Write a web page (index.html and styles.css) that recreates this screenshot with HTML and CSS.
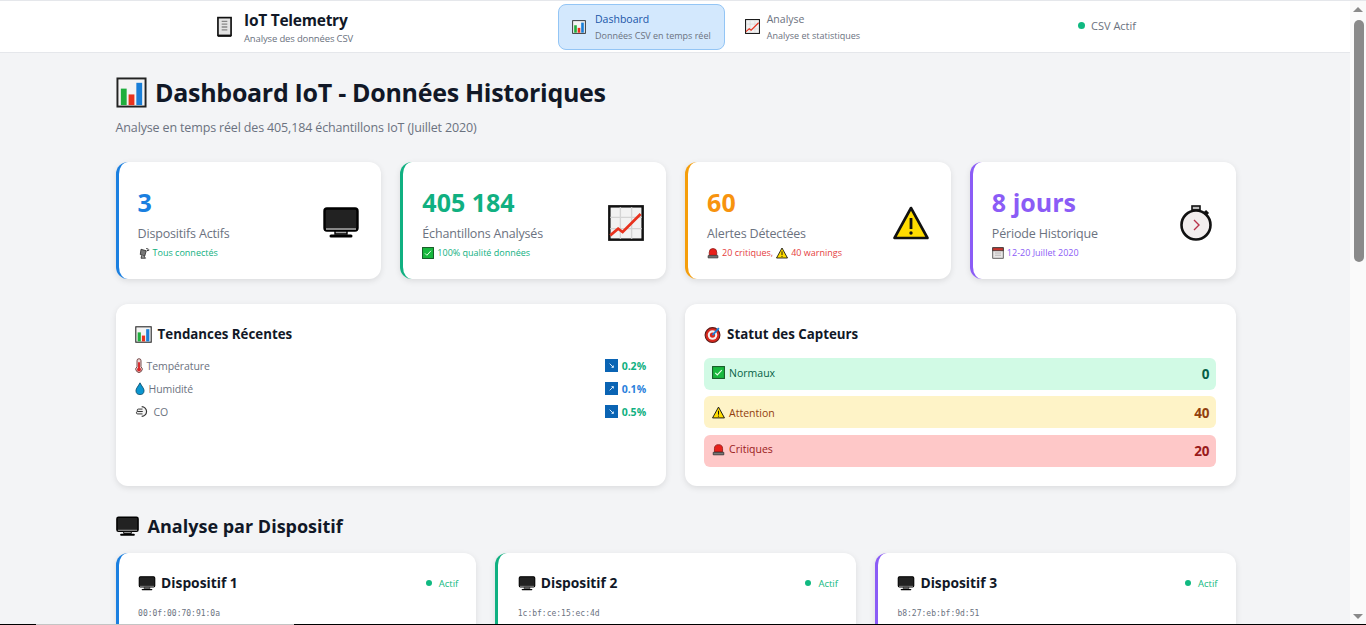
FILE: index.html
```html
<!DOCTYPE html>
<html lang="fr">
<head>
<meta charset="utf-8">
<title>IoT Telemetry</title>
<link rel="stylesheet" href="styles.css">
</head>
<body>
<svg class="sprite" aria-hidden="true">
  <symbol id="i-chart" viewBox="0 0 32 32"><rect x="1.5" y="1.5" width="29" height="29" fill="#f4f4f4" stroke="#222" stroke-width="2"/><rect x="5" y="12" width="6" height="17" fill="#1fae3c"/><rect x="13" y="18" width="6" height="11" fill="#e8321e"/><rect x="21" y="6" width="6" height="23" fill="#1a7fd8"/></symbol>
  <symbol id="i-monitor" viewBox="0 0 36 32"><rect x="1.5" y="1.5" width="33" height="22" rx="2.5" fill="#222" stroke="#000" stroke-width="2.4"/><path d="M3 21h30v2H3z" fill="#888"/><path d="M12 24h12v3H12z" fill="#aaa" stroke="#000" stroke-width="1.4"/><path d="M8 29h20" stroke="#000" stroke-width="3" stroke-linecap="round"/></symbol>
  <symbol id="i-trend" viewBox="0 0 32 32"><rect x="1.2" y="1.2" width="29.6" height="29.6" fill="#f2f2f2" stroke="#111" stroke-width="2.2"/><path d="M11 2v28M21 2v28M2 11h28M2 21h28" stroke="#d4d4d4" stroke-width="1.2"/><path d="M2 27l7-6 4 3L29 8" fill="none" stroke="#e8321e" stroke-width="2.4"/></symbol>
  <symbol id="i-warn" viewBox="0 0 36 36"><path d="M18 3L34.500 33H1.500z" fill="#ffdc00" stroke="#111" stroke-width="2.600" stroke-linejoin="round"/><path d="M18 13v11" stroke="#111" stroke-width="2.800"/><circle cx="18" cy="28" r="1.700" fill="#111"/></symbol>
  <symbol id="i-watch" viewBox="0 0 32 36"><rect x="12" y="1" width="8" height="4" fill="#bbb" stroke="#111" stroke-width="1.600"/><path d="M25 6l3 3" stroke="#111" stroke-width="3"/><circle cx="16" cy="20" r="14.500" fill="#f2eeee" stroke="#111" stroke-width="2.600"/><path d="M14 15l5 5-5 5" fill="none" stroke="#b8324a" stroke-width="1.400"/></symbol>
  <symbol id="i-sat" viewBox="0 0 16 16"><path d="M4 3l7 2-2 7-6-2z" fill="#777" stroke="#222"/><path d="M5 11l-1 4h6l-2-3" fill="#999" stroke="#222"/><path d="M11 2l3 1M12 5l3-1" stroke="#222" stroke-width="1.300"/></symbol>
  <symbol id="i-check" viewBox="0 0 16 16"><rect x=".7" y=".7" width="14.600" height="14.600" fill="#18b83e" stroke="#155a26" stroke-width="1.300"/><path d="M4 8.500l2.500 2.500L12 5" fill="none" stroke="#eaffea" stroke-width="1.300"/></symbol>
  <symbol id="i-siren" viewBox="0 0 16 16"><path d="M3 11V7a5 5 0 0 1 10 0v4z" fill="#e8201a" stroke="#8a1a18"/><path d="M1.500 11.500h13v3h-13z" fill="#777" stroke="#333"/></symbol>
  <symbol id="i-cal" viewBox="0 0 16 16"><rect x="1" y="1" width="14" height="14" fill="#e8e6e6" stroke="#333"/><rect x="1" y="1" width="14" height="4" fill="#c8352e" stroke="#333"/><path d="M4 8h8M4 11h8" stroke="#aaa"/></symbol>
  <symbol id="i-therm" viewBox="0 0 10 18"><path d="M2.500 3a2.500 2.500 0 0 1 5 0v7.500a4 4 0 1 1-5 0z" fill="#f0d8d8" stroke="#522"/><path d="M5 5v9" stroke="#d8282a" stroke-width="2.400"/><circle cx="5" cy="14" r="2.500" fill="#d8282a"/></symbol>
  <symbol id="i-drop" viewBox="0 0 12 16"><path d="M6 1C4 5 1 8 1 10.500a5 5 0 0 0 10 0C11 8 8 5 6 1z" fill="#0b95cf" stroke="#0a4a68"/></symbol>
  <symbol id="i-wind" viewBox="0 0 18 16"><path d="M8 2a6 6 0 1 1 0 12" fill="#f4f4f4" stroke="#333" stroke-width="1.400"/><path d="M9 5H4a1.500 1.500 0 0 0 0 3h5M9 8H3a1.500 1.500 0 0 0 0 3h6" fill="#eee" stroke="#333" stroke-width="1.200"/></symbol>
  <symbol id="i-down" viewBox="0 0 14 14"><rect width="14" height="14" fill="#0a64b4"/><path d="M5 5l4 4M9 7v2H7" fill="none" stroke="#e8f4ff" stroke-width="1"/></symbol>
  <symbol id="i-up" viewBox="0 0 14 14"><rect width="14" height="14" fill="#0a64b4"/><path d="M5 9l4-4M7 5h2v2" fill="none" stroke="#e8f4ff" stroke-width="1"/></symbol>
  <symbol id="i-target" viewBox="0 0 16 16"><circle cx="8" cy="8.500" r="7" fill="#d8281e" stroke="#5a1a18"/><circle cx="8" cy="8.500" r="4.500" fill="#f6f0f0"/><circle cx="8" cy="8.500" r="2.500" fill="#d8281e"/><path d="M8 8.500L14 2" stroke="#1a7fd8" stroke-width="1.800"/></symbol>
  <symbol id="i-pager" viewBox="0 0 16 22"><rect x="1" y="1" width="14" height="19" fill="#e4e4e4" stroke="#111" stroke-width="1.800"/><path d="M5 5h6M5 8h6M5 11h6M5 14h6" stroke="#888" stroke-width="1.400"/><path d="M1 20h14v1.500H1z" fill="#111"/></symbol>
</svg>

<div class="app">
  <div class="main">
    <header class="topbar">
      <div class="brand">
        <svg class="brand-icon"><use href="#i-pager"/></svg>
        <div>
          <div class="brand-name">IoT Telemetry</div>
          <div class="brand-sub">Analyse des données CSV</div>
        </div>
      </div>
      <nav class="nav">
        <a class="nav-item nav-active">
          <svg class="nav-icon"><use href="#i-chart"/></svg>
          <span class="nav-text"><span class="nav-title">Dashboard</span><span class="nav-sub">Données CSV en temps réel</span></span>
        </a>
        <a class="nav-item">
          <svg class="nav-icon"><use href="#i-trend"/></svg>
          <span class="nav-text"><span class="nav-title">Analyse</span><span class="nav-sub">Analyse et statistiques</span></span>
        </a>
      </nav>
      <div class="csv-status"><span class="dot"></span>CSV Actif</div>
    </header>

    <main class="content">
      <h1 class="page-title"><svg class="page-icon"><use href="#i-chart"/></svg>Dashboard IoT - Données Historiques</h1>
      <p class="page-sub">Analyse en temps réel des 405,184 échantillons IoT (Juillet 2020)</p>

      <section class="kpis">
        <article class="kpi kpi-blue">
          <div class="kpi-body">
            <div class="kpi-value">3</div>
            <div class="kpi-label">Dispositifs Actifs</div>
            <div class="kpi-note"><svg class="mini"><use href="#i-sat"/></svg>Tous connectés</div>
          </div>
          <svg class="kpi-icon"><use href="#i-monitor"/></svg>
        </article>
        <article class="kpi kpi-green">
          <div class="kpi-body">
            <div class="kpi-value">405 184</div>
            <div class="kpi-label">Échantillons Analysés</div>
            <div class="kpi-note"><svg class="mini"><use href="#i-check"/></svg>100% qualité données</div>
          </div>
          <svg class="kpi-icon"><use href="#i-trend"/></svg>
        </article>
        <article class="kpi kpi-orange">
          <div class="kpi-body">
            <div class="kpi-value">60</div>
            <div class="kpi-label">Alertes Détectées</div>
            <div class="kpi-note"><svg class="mini"><use href="#i-siren"/></svg>20 critiques,<svg class="mini mini-after"><use href="#i-warn"/></svg>40 warnings</div>
          </div>
          <svg class="kpi-icon"><use href="#i-warn"/></svg>
        </article>
        <article class="kpi kpi-purple">
          <div class="kpi-body">
            <div class="kpi-value">8 jours</div>
            <div class="kpi-label">Période Historique</div>
            <div class="kpi-note"><svg class="mini"><use href="#i-cal"/></svg>12-20 Juillet 2020</div>
          </div>
          <svg class="kpi-icon"><use href="#i-watch"/></svg>
        </article>
      </section>

      <section class="panels">
        <article class="panel">
          <h2 class="panel-title"><svg class="panel-icon"><use href="#i-chart"/></svg>Tendances Récentes</h2>
          <ul class="trends">
            <li class="trend"><span class="trend-name"><svg class="mini mini-therm"><use href="#i-therm"/></svg>Température</span><span class="trend-val val-green"><svg class="mini"><use href="#i-down"/></svg>0.2%</span></li>
            <li class="trend"><span class="trend-name"><svg class="mini mini-drop"><use href="#i-drop"/></svg>Humidité</span><span class="trend-val val-blue"><svg class="mini"><use href="#i-up"/></svg>0.1%</span></li>
            <li class="trend"><span class="trend-name"><svg class="mini mini-wind"><use href="#i-wind"/></svg>CO</span><span class="trend-val val-green"><svg class="mini"><use href="#i-down"/></svg>0.5%</span></li>
          </ul>
        </article>
        <article class="panel">
          <h2 class="panel-title"><svg class="panel-icon"><use href="#i-target"/></svg>Statut des Capteurs</h2>
          <div class="statuses">
            <div class="status st-ok"><span class="status-name"><svg class="st-icon"><use href="#i-check"/></svg>Normaux</span><b class="status-num">0</b></div>
            <div class="status st-warn"><span class="status-name"><svg class="st-icon"><use href="#i-warn"/></svg>Attention</span><b class="status-num">40</b></div>
            <div class="status st-crit"><span class="status-name"><svg class="st-icon"><use href="#i-siren"/></svg>Critiques</span><b class="status-num">20</b></div>
          </div>
        </article>
      </section>

      <h2 class="section-title"><svg class="section-icon"><use href="#i-monitor"/></svg>Analyse par Dispositif</h2>
      <section class="devices">
        <article class="device kpi-blue">
          <div class="device-head"><h3 class="device-name"><svg class="device-icon"><use href="#i-monitor"/></svg>Dispositif 1</h3><span class="device-state"><span class="dot"></span>Actif</span></div>
          <div class="device-mac">00:0f:00:70:91:0a</div>
        </article>
        <article class="device kpi-green">
          <div class="device-head"><h3 class="device-name"><svg class="device-icon"><use href="#i-monitor"/></svg>Dispositif 2</h3><span class="device-state"><span class="dot"></span>Actif</span></div>
          <div class="device-mac">1c:bf:ce:15:ec:4d</div>
        </article>
        <article class="device kpi-purple">
          <div class="device-head"><h3 class="device-name"><svg class="device-icon"><use href="#i-monitor"/></svg>Dispositif 3</h3><span class="device-state"><span class="dot"></span>Actif</span></div>
          <div class="device-mac">b8:27:eb:bf:9d:51</div>
        </article>
      </section>
    </main>
  </div>
  <div class="scrollbar" aria-hidden="true">
    <span class="arrow arrow-up"></span>
    <span class="thumb"></span>
    <span class="arrow arrow-down"></span>
  </div>
</div>
<div class="edge-line" aria-hidden="true"></div>
</body>
</html>
```
FILE: styles.css
```css
* { box-sizing: border-box; }
html, body { margin: 0; height: 625px; overflow: hidden; }
body { position: relative; font-family: "Open Sans", "Noto Sans", sans-serif; color: #111827; background: #f3f4f6; }
.sprite { display: none; }
.app { display: flex; height: 625px; border-top: 1px solid #e5e7eb; border-bottom: 1px solid #000; }
.main { flex: 1; min-width: 0; overflow: hidden; }
.edge-line { position: absolute; left: 36px; bottom: 0; width: 258px; height: 1px; background: #c4c4c4; }

.topbar { display: grid; grid-template-columns: 341px 520px auto; align-items: center; height: 52px; padding-left: 217px; background: #fff; border-bottom: 1px solid #e5e7eb; }
.brand { display: flex; align-items: center; gap: 12px; }
.brand-icon { width: 15px; height: 22px; }
.brand-name { margin-top: 1px; font-size: 15.500px; font-weight: 700; line-height: 20px; letter-spacing: -.25px; }
.brand-sub { margin-top: 2px; font-size: 9.500px; line-height: 13px; letter-spacing: -.15px; color: #6b7280; }
.nav { display: flex; gap: 19px; }
.nav-item { display: flex; align-items: center; gap: 9px; height: 46px; padding: 0 13px; border: 1px solid transparent; border-radius: 8px; }
.nav-item + .nav-item { gap: 7px; padding-left: 0; }
.nav-active { background: #d3e8fd; border-color: #93c5f5; }
.nav-icon { width: 14px; height: 14px; }
.nav-item + .nav-item .nav-icon { width: 15px; height: 15px; }
.nav-text { display: flex; flex-direction: column; gap: 3px; padding-top: 1px; }
.nav-title { font-size: 10.500px; line-height: 14px; color: #6b7280; }
.nav-sub { font-size: 9px; line-height: 13px; color: #6b7280; }
.nav-active .nav-title { color: #1a56a8; }
.csv-status { display: flex; align-items: center; gap: 6px; margin-top: -2px; font-size: 11px; color: #6b7280; }
.dot { width: 7px; height: 7px; border-radius: 50%; background: #10b981; flex: none; }

.content { width: 1120px; margin: 0 0 0 115.600px; padding-top: 21px; }
.page-title { display: flex; align-items: center; gap: 8.500px; margin: 0; font-size: 25px; line-height: 36px; font-weight: 700; letter-spacing: -.3px; }
.page-icon { width: 31px; height: 31px; }
.page-sub { margin: 9px 0 0; font-size: 12.500px; line-height: 18px; letter-spacing: -.15px; color: #6b7280; }

.kpis { display: grid; grid-template-columns: repeat(4, 1fr); gap: 19px; margin-top: 25px; }
.kpi { display: flex; justify-content: space-between; align-items: center; height: 117px; padding: 0 22px 0 19px; background: #fff; border-left: 3px solid; border-radius: 12px; box-shadow: 0 2px 6px rgba(0,0,0,.1); }
.kpi-body { padding-top: 4px; }
.kpi-value { font-size: 25px; line-height: 34px; font-weight: 700; }
.kpi-label { margin-top: 6px; font-size: 12.500px; line-height: 18px; letter-spacing: -.18px; color: #6b7280; }
.kpi-note { display: flex; align-items: center; margin-top: 3px; font-size: 9px; line-height: 14px; color: #10b081; }
.kpi-orange .kpi-note { color: #e53e3e; }
.kpi-purple .kpi-note { color: #8b5cf6; }
.mini { width: 12px; height: 12px; margin-right: 3px; flex: none; }
.mini-after { margin-left: 3px; }
.kpi-icon { width: 36px; height: 36px; margin-top: 4px; }

.panels { display: grid; grid-template-columns: 1fr 1fr; gap: 19px; margin-top: 25px; }
.panel { height: 182px; padding: 20px 20px 0 19px; background: #fff; border-radius: 12px; box-shadow: 0 2px 6px rgba(0,0,0,.1); }
.panel-title { display: flex; align-items: center; gap: 6px; margin: 0; font-size: 13.300px; line-height: 20px; font-weight: 700; }
.panel-icon { width: 17px; height: 17px; }
.trends { margin: 10px 0 0; padding: 0; list-style: none; }
.trend { display: flex; justify-content: space-between; align-items: center; height: 23px; font-size: 10.500px; }
.trend-name { display: flex; align-items: center; letter-spacing: -.1px; color: #6b7280; }
.mini-therm { width: 8px; height: 15px; margin-right: 4px; }
.mini-drop { width: 10px; height: 13px; margin-right: 4px; }
.mini-wind { width: 15px; height: 13px; margin-right: 4px; }
.trend-val { display: flex; align-items: center; font-weight: 700; font-size: 10.500px; }
.trend-val .mini { width: 13px; height: 13px; margin-right: 4px; }
.val-green { color: #10b081; }
.val-blue { color: #2a7fdc; }
.statuses { display: flex; flex-direction: column; gap: 6.400px; margin-top: 14px; }
.status { display: flex; justify-content: space-between; align-items: center; height: 32px; padding: 0 6px 0 8px; border-radius: 6px; }
.status-name { display: flex; align-items: center; gap: 4px; font-size: 10.500px; margin-top: -3px; }
.st-icon { width: 13px; height: 13px; }
.status-num { font-size: 13.500px; }
.st-ok { background: #d1fae5; color: #065f46; }
.st-warn { padding-top: 2px; background: #fef3c7; color: #92400e; }
.st-warn .status-name { margin-top: -1px; }
.st-crit { background: #fec8c8; color: #991b1b; }

.section-title { display: flex; align-items: center; gap: 9px; margin: 27px 0 0; font-size: 18px; line-height: 26px; font-weight: 700; }
.section-icon { width: 23px; height: 21px; }
.devices { display: grid; grid-template-columns: repeat(3, 1fr); gap: 19px; margin-top: 14px; }
.device { height: 120px; padding: 20px 18px 0 19.500px; background: #fff; border-left: 3px solid; border-radius: 12px; box-shadow: 0 2px 6px rgba(0,0,0,.1); }
.device-head { display: flex; justify-content: space-between; align-items: center; }
.device-name { display: flex; align-items: center; gap: 5px; margin: 0; font-size: 13.800px; line-height: 20px; font-weight: 700; }
.device-icon { width: 18px; height: 15px; }
.device-state { display: flex; align-items: center; gap: 7px; font-size: 9.500px; color: #10b981; }
.device-state .dot { width: 6px; height: 6px; }
.device-mac { margin-top: 15px; font-family: "DejaVu Sans Mono", monospace; font-size: 8px; line-height: 12px; color: #6b7280; }

.kpi-blue { border-left-color: #1a7fe0; }
.kpi-green { border-left-color: #10b081; }
.kpi-orange { border-left-color: #f59e0b; }
.kpi-purple { border-left-color: #8b5cf6; }
.kpi-blue .kpi-value { color: #1a7fe0; }
.kpi-green .kpi-value { color: #10b081; }
.kpi-orange .kpi-value { color: #f7930f; }
.kpi-purple .kpi-value { color: #8b5cf6; }

.scrollbar { position: relative; width: 16px; flex: none; background: #fafafa; display: flex; flex-direction: column; align-items: center; }
.thumb { position: absolute; top: 19px; left: 4px; width: 10px; height: 242px; border-radius: 5px; background: #8a8a8a; }
.arrow { position: absolute; left: 3px; width: 0; height: 0; border-left: 5px solid transparent; border-right: 5px solid transparent; }
.arrow-up { top: 6px; border-bottom: 5px solid #8a8a8a; }
.arrow-down { bottom: 5px; border-top: 5px solid #8a8a8a; }
```
